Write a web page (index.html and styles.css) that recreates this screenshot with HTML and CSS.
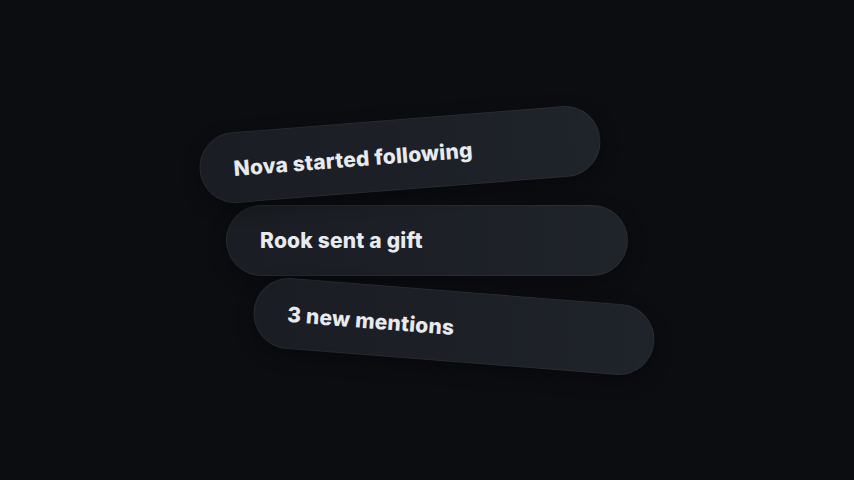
FILE: index.html
```html
<!DOCTYPE html>
<html lang="en">
  <head>
    <meta charset="UTF-8" />
    <meta name="viewport" content="width=device-width, initial-scale=1.0" />
    <title>Notifications</title>
    <link rel="stylesheet" href="styles.css">
  </head>
  <body>
    <div class="stack">
      <!-- Notification pills -->
      <div class="pill pill-top">Nova started following</div>
      <div class="pill pill-mid">Rook sent a gift</div>
      <div class="pill pill-bottom">3 new mentions</div>
    </div>
  </body>
</html>
```

FILE: styles.css
```css
html,
body {
  height: 100%;
}

body {
  margin: 0;
  background-color: #0c0d11;
  font-family: Inter, "Noto Sans", sans-serif;
  color: #e7eaef;
}

.stack {
  height: 100%;
  display: flex;
  flex-direction: column;
  align-items: center;
  justify-content: center;
  gap: 15px;
}

.pill {
  box-sizing: border-box;
  width: 402px;
  height: 71px;
  padding: 1px 33px 0;
  display: flex;
  align-items: center;
  border-radius: 36px;
  background: linear-gradient(90deg, #1a1d23, #1f232a);
  border: 1px solid rgba(255, 255, 255, 0.05);
  box-shadow: 0 6px 18px rgba(0, 0, 0, 0.35);
  font-size: 21px;
  font-weight: 800;
  letter-spacing: 0.2px;
}

.pill-top {
  transform: translateX(-27px) rotate(-4.5deg);
}

.pill-bottom {
  transform: translateX(27px) rotate(4.5deg);
}
```
